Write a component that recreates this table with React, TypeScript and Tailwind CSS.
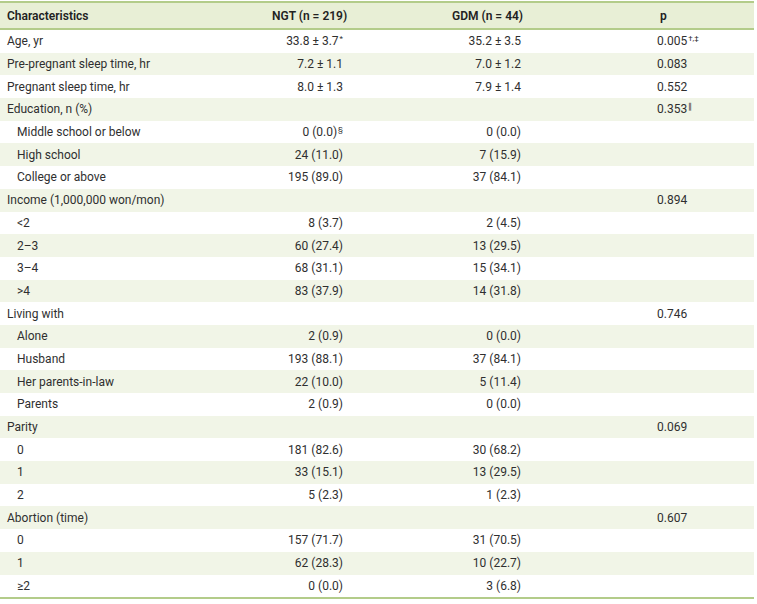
type Row = {
  label: string
  sub?: boolean
  ngt?: string
  ngtSup?: string
  gdm?: string
  p?: string
  pSup?: string
}

const rows: Row[] = [
  { label: "Age, yr", ngt: "33.8 ± 3.7", ngtSup: "*", gdm: "35.2 ± 3.5", p: "0.005", pSup: "†,‡" },
  { label: "Pre-pregnant sleep time, hr", ngt: "7.2 ± 1.1", gdm: "7.0 ± 1.2", p: "0.083" },
  { label: "Pregnant sleep time, hr", ngt: "8.0 ± 1.3", gdm: "7.9 ± 1.4", p: "0.552" },
  { label: "Education, n (%)", p: "0.353", pSup: "∥" },
  { label: "Middle school or below", sub: true, ngt: "0 (0.0)", ngtSup: "§", gdm: "0 (0.0)" },
  { label: "High school", sub: true, ngt: "24 (11.0)", gdm: "7 (15.9)" },
  { label: "College or above", sub: true, ngt: "195 (89.0)", gdm: "37 (84.1)" },
  { label: "Income (1,000,000 won/mon)", p: "0.894" },
  { label: "<2", sub: true, ngt: "8 (3.7)", gdm: "2 (4.5)" },
  { label: "2–3", sub: true, ngt: "60 (27.4)", gdm: "13 (29.5)" },
  { label: "3–4", sub: true, ngt: "68 (31.1)", gdm: "15 (34.1)" },
  { label: ">4", sub: true, ngt: "83 (37.9)", gdm: "14 (31.8)" },
  { label: "Living with", p: "0.746" },
  { label: "Alone", sub: true, ngt: "2 (0.9)", gdm: "0 (0.0)" },
  { label: "Husband", sub: true, ngt: "193 (88.1)", gdm: "37 (84.1)" },
  { label: "Her parents-in-law", sub: true, ngt: "22 (10.0)", gdm: "5 (11.4)" },
  { label: "Parents", sub: true, ngt: "2 (0.9)", gdm: "0 (0.0)" },
  { label: "Parity", p: "0.069" },
  { label: "0", sub: true, ngt: "181 (82.6)", gdm: "30 (68.2)" },
  { label: "1", sub: true, ngt: "33 (15.1)", gdm: "13 (29.5)" },
  { label: "2", sub: true, ngt: "5 (2.3)", gdm: "1 (2.3)" },
  { label: "Abortion (time)", p: "0.607" },
  { label: "0", sub: true, ngt: "157 (71.7)", gdm: "31 (70.5)" },
  { label: "1", sub: true, ngt: "62 (28.3)", gdm: "10 (22.7)" },
  { label: "≥2", sub: true, ngt: "0 (0.0)", gdm: "3 (6.8)" },
]

const cols = "grid grid-cols-[230px_164px_188px_172px]"

export default function App() {
  return (
    <div className="bg-white pt-px font-['Roboto','Liberation_Sans',sans-serif] text-[12px] text-[#2f2f2f]">
      <div className="w-[754px] border-y-2 border-[#b3cc8a]">
        {/* header */}
        <div className={`${cols} h-[27px] items-center border-b-2 border-[#b3cc8a] bg-[#e8efd6] font-semibold text-[#222]`}>
          <div className="pl-[7px]">Characteristics</div>
          <div className="pl-[42px]">NGT (n = 219)</div>
          <div className="pl-[58px]">GDM (n = 44)</div>
          <div className="pl-[78px]">p</div>
        </div>

        {rows.map((r, i) => (
          <div
            key={i}
            className={`${cols} h-[22.7px] items-center ${i % 2 === 1 ? "bg-[#f1f5e7]" : "bg-white"}`}
          >
            <div className={r.sub ? "pl-[17px]" : "pl-[7px]"}>{r.label}</div>
            <div className="pr-[51px] text-right">
              {r.ngt}
              {r.ngtSup && <sup className="ml-px text-[8px]">{r.ngtSup}</sup>}
            </div>
            <div className="pr-[61px] text-right">{r.gdm}</div>
            <div className="pl-[75px]">
              {r.p}
              {r.pSup && <sup className="ml-px text-[8px]">{r.pSup}</sup>}
            </div>
          </div>
        ))}
      </div>
    </div>
  )
}
